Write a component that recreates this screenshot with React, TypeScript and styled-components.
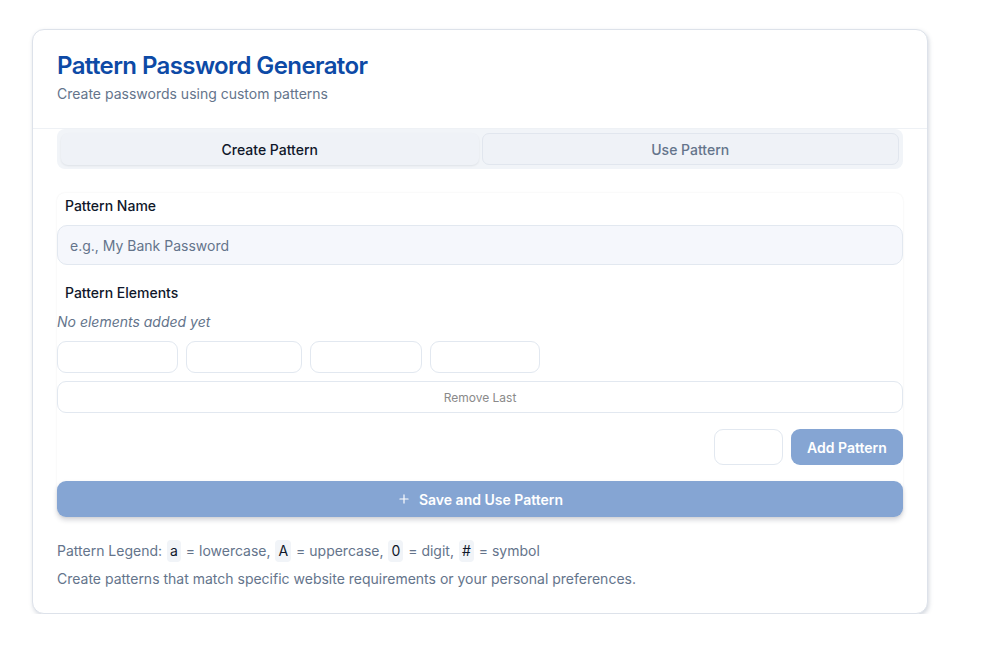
import React from "react";
import styled, { createGlobalStyle } from "styled-components";

const Global = createGlobalStyle`
  * { box-sizing: border-box; }
  body {
    margin: 0;
    background: #ffffff;
    font-family: Inter, "Noto Sans", "Liberation Sans", sans-serif;
    color: #0f172a;
  }
`;

const Page = styled.div`
  padding: 29px 0 0 32px;
`;

const Card = styled.div`
  width: 896px;
  background: #ffffff;
  border: 1px solid #dde2ea;
  border-radius: 12px;
  box-shadow: 1px 2px 4px rgba(100, 116, 139, 0.28);
`;

const Header = styled.div`
  padding: 24px 24px 24px;
  border-bottom: 1px solid #eef1f5;
  display: flex;
  flex-direction: column;
  gap: 6px;
`;

const Title = styled.h1`
  margin: 0;
  font-size: 24px;
  line-height: 1;
  font-weight: 600;
  letter-spacing: -0.6px;
  color: #0d4aa6;
`;

const Subtitle = styled.p`
  margin: 0;
  font-size: 14px;
  line-height: 20px;
  color: #64748b;
`;

const Body = styled.div`
  padding: 0 24px 24px;
`;

const TabList = styled.div`
  display: grid;
  grid-template-columns: 1fr 1fr;
  gap: 3px;
  height: 40px;
  padding: 4px;
  background: #f1f4f8;
  border-radius: 8px;
`;

const Tab = styled.button<{ $active?: boolean }>`
  font-family: inherit;
  font-size: 14px;
  font-weight: 500;
  border-radius: 7px;
  background: #eff2f7;
  border: 1px solid ${(p) => (p.$active ? "transparent" : "#e1e6ee")};
  color: ${(p) => (p.$active ? "#0f172a" : "#64748b")};
  box-shadow: ${(p) => (p.$active ? "0 1px 2px rgba(15,23,42,0.08)" : "none")};
  cursor: pointer;
`;

const Panel = styled.div`
  margin-top: 24px;
  border-radius: 8px;
  background: #fff;
  box-shadow: 0 0 2px rgba(15, 23, 42, 0.08);
  display: flex;
  flex-direction: column;
`;

const Label = styled.div<{ $top: number }>`
  margin-top: ${(p) => p.$top}px;
  padding-left: 8px;
  font-size: 14px;
  line-height: 20px;
  font-weight: 500;
  color: #0f172a;
`;

const TextInput = styled.input`
  margin-top: 9px;
  height: 40px;
  width: 100%;
  padding: 0 12px;
  font-family: inherit;
  font-size: 14px;
  color: #0f172a;
  background: #f5f7fc;
  border: 1px solid #e2e8f0;
  border-radius: 10px;
  outline: none;
  &::placeholder { color: #64748b; }
`;

const Empty = styled.div`
  margin-top: 9px;
  font-size: 14px;
  line-height: 20px;
  font-style: italic;
  color: #64748b;
`;

const ChipRow = styled.div`
  margin-top: 9px;
  display: flex;
  gap: 8px;
`;

const ChipButton = styled.button<{ $w: number }>`
  width: ${(p) => p.$w}px;
  height: 32px;
  background: #fff;
  border: 1px solid #e2e8f0;
  border-radius: 9px;
`;

const OutlineButton = styled.button`
  margin-top: 8px;
  height: 32px;
  width: 100%;
  font-family: inherit;
  font-size: 12px;
  color: #8a8a8a;
  background: #fff;
  border: 1px solid #e2e8f0;
  border-radius: 9px;
`;

const ActionRow = styled.div`
  margin-top: 16px;
  display: flex;
  justify-content: flex-end;
  gap: 8px;
`;

const SmallInput = styled.input`
  width: 69px;
  height: 36px;
  border: 1px solid #e2e8f0;
  border-radius: 9px;
  background: #fff;
  outline: none;
`;

const PrimaryButton = styled.button<{ $full?: boolean }>`
  height: 36px;
  width: ${(p) => (p.$full ? "100%" : "112px")};
  margin-top: ${(p) => (p.$full ? "16px" : "0")};
  display: flex;
  align-items: center;
  justify-content: center;
  gap: 8px;
  font-family: inherit;
  font-size: 14px;
  font-weight: 600;
  color: #fff;
  background: #85a5d3;
  border: none;
  border-radius: 9px;
  box-shadow: ${(p) => (p.$full ? "0 3px 5px rgba(15,23,42,0.18)" : "none")};
`;

const Footer = styled.div`
  margin-top: 23px;
  display: flex;
  flex-direction: column;
  gap: 7px;
  font-size: 14px;
  line-height: 20px;
  color: #64748b;
`;

const Line = styled.p`
  margin: 0;
`;

const Code = styled.span`
  display: inline-block;
  padding: 1px 3px;
  margin: 0 1px;
  background: #f1f4f8;
  border-radius: 4px;
  color: #0f172a;
`;

const PlusIcon = () => (
  <svg width="14" height="14" viewBox="0 0 24 24" fill="none" stroke="currentColor" strokeWidth="2" strokeLinecap="round">
    <path d="M5 12h14" />
    <path d="M12 5v14" />
  </svg>
);

export default function App() {
  return (
    <>
      <Global />
      <Page>
        <Card>
          <Header>
            <Title>Pattern Password Generator</Title>
            <Subtitle>Create passwords using custom patterns</Subtitle>
          </Header>
          <Body>
            <TabList>
              <Tab $active>Create Pattern</Tab>
              <Tab>Use Pattern</Tab>
            </TabList>
            <Panel>
              <Label $top={3}>Pattern Name</Label>
              <TextInput placeholder="e.g., My Bank Password" />
              <Label $top={18}>Pattern Elements</Label>
              <Empty>No elements added yet</Empty>
              <ChipRow>
                <ChipButton $w={121} />
                <ChipButton $w={116} />
                <ChipButton $w={112} />
                <ChipButton $w={110} />
              </ChipRow>
              <OutlineButton>Remove Last</OutlineButton>
              <ActionRow>
                <SmallInput />
                <PrimaryButton>Add Pattern</PrimaryButton>
              </ActionRow>
              <PrimaryButton $full>
                <PlusIcon />
                Save and Use Pattern
              </PrimaryButton>
            </Panel>
            <Footer>
              <Line>
                Pattern Legend: <Code>a</Code> = lowercase, <Code>A</Code> = uppercase, <Code>0</Code> = digit,{" "}
                <Code>#</Code> = symbol
              </Line>
              <Line>Create patterns that match specific website requirements or your personal preferences.</Line>
            </Footer>
          </Body>
        </Card>
      </Page>
    </>
  );
}
